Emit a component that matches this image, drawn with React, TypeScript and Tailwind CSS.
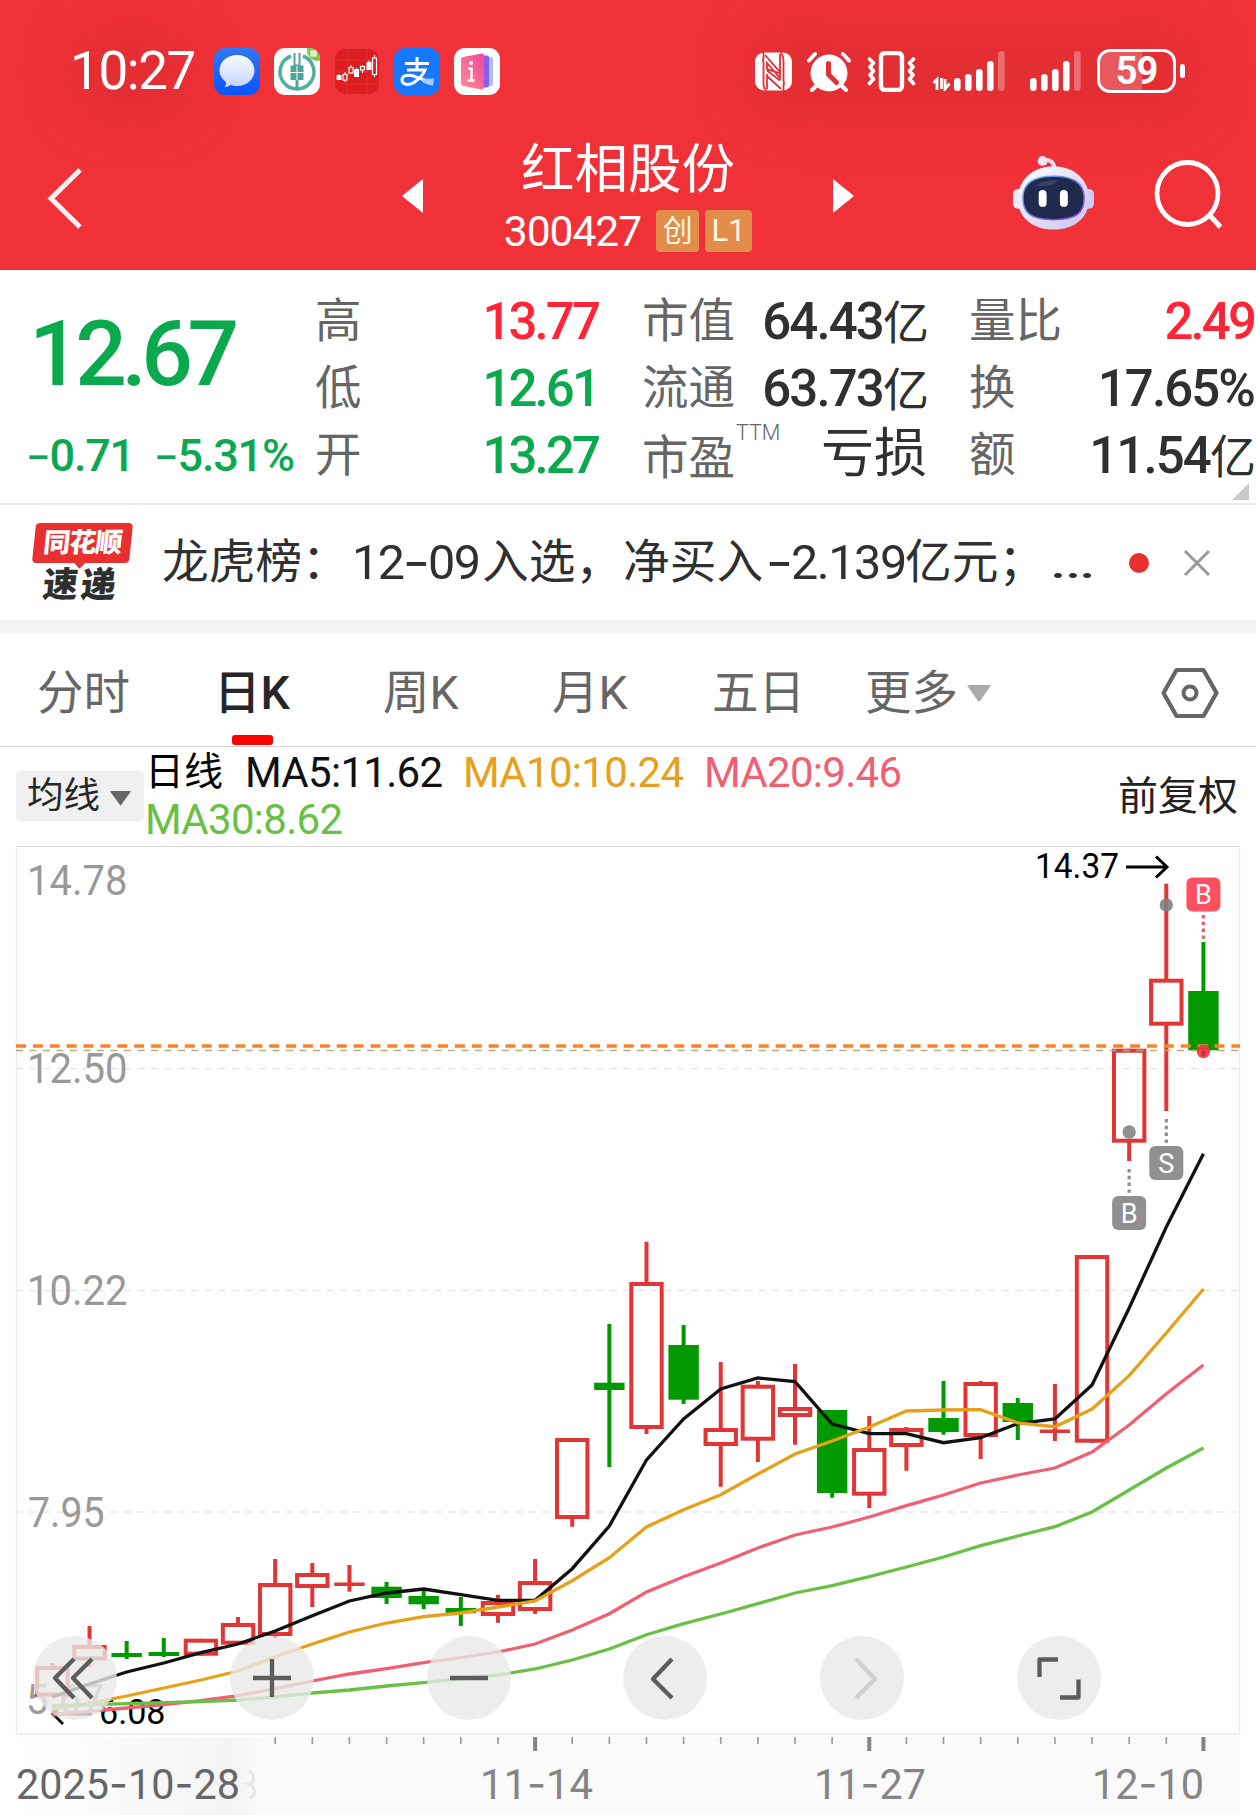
import { clsx } from "clsx";
import type { ReactNode } from "react";

type Candle = {
  kind: "up" | "down" | "flat";
  high: number;
  top: number;
  bottom: number;
  low: number;
};

const STEP = 37.13;
const FIRST_X = 52.4;
const xAt = (i: number) => FIRST_X + STEP * i;

// [kind, high, body top, body bottom, low]
const RAW: [Candle["kind"], number, number, number, number][] = [
  ["up", 1663, 1666, 1696.5, 1697],
  ["up", 1626, 1645, 1660.5, 1667],
  ["down", 1641, 1653, 1657, 1659],
  ["down", 1638, 1652, 1656, 1657],
  ["up", 1638.7, 1638.7, 1655.7, 1655.7],
  ["up", 1617, 1623, 1644.7, 1644.7],
  ["up", 1559, 1583, 1636, 1638],
  ["up", 1563, 1573, 1588, 1607],
  ["flat", 1565, 1582.5, 1586, 1591.7],
  ["down", 1582, 1586.7, 1598, 1604],
  ["down", 1590, 1596, 1604.3, 1609],
  ["down", 1597, 1608, 1613.3, 1626],
  ["up", 1594.7, 1601, 1616, 1622.7],
  ["up", 1559, 1581, 1611, 1614],
  ["up", 1438, 1438, 1519, 1526.7],
  ["down", 1324, 1382.7, 1390, 1467],
  ["up", 1241.7, 1282, 1429, 1434],
  ["down", 1325, 1345, 1399.7, 1404],
  ["up", 1362, 1428, 1446, 1486.7],
  ["up", 1381, 1384.7, 1440.7, 1462],
  ["up", 1364, 1407, 1417, 1444.7],
  ["down", 1410, 1410, 1493, 1497.7],
  ["up", 1416, 1448, 1495.7, 1508],
  ["up", 1427, 1428, 1447, 1470.7],
  ["down", 1381, 1418, 1432, 1434.7],
  ["up", 1381, 1382, 1437, 1459],
  ["down", 1398, 1403, 1422, 1440],
  ["flat", 1384, 1429.5, 1433, 1441],
  ["up", 1255, 1255, 1442.7, 1442.7],
  ["up", 1048.7, 1048.7, 1142.7, 1161],
  ["up", 883.7, 978.7, 1025.7, 1111],
  ["down", 942, 991, 1050.3, 1050.3],
];

const CANDLES: Candle[] = RAW.map(([kind, high, top, bottom, low]) => ({
  kind,
  high,
  top,
  bottom,
  low,
}));

const MA_LINES = [
  {
    color: "#111111",
    ys: [
      1697, 1684, 1672, 1663, 1652.7, 1644, 1631, 1615.7, 1601, 1593, 1589,
      1594.7, 1600.3, 1600.3, 1568.7, 1526, 1460, 1419, 1389, 1378, 1381.7,
      1424, 1433.7, 1433.7, 1442.7, 1437.7, 1423.5, 1419, 1385, 1308, 1227,
      1153.7,
    ],
  },
  {
    color: "#e6a019",
    ys: [
      1709, 1703, 1696, 1688, 1680, 1671, 1656.7, 1644, 1632, 1623, 1616.7,
      1613, 1607, 1601, 1580.7, 1557.7, 1527, 1509.7, 1494.7, 1474, 1454, 1441,
      1427, 1411, 1410, 1409.7, 1423, 1426.7, 1409, 1375.7, 1333, 1289,
    ],
  },
  {
    color: "#f05f72",
    ys: [
      1715, 1711.3, 1708, 1704.7, 1700.7, 1695.7, 1688.7, 1681, 1674, 1668.7,
      1662.7, 1657.7, 1652, 1644, 1630, 1613.7, 1592, 1576.7, 1563, 1548, 1535,
      1527, 1517, 1505.7, 1495, 1483, 1475, 1468, 1452, 1425, 1393.7, 1365,
    ],
  },
  {
    color: "#6abf45",
    ys: [
      1705.7, 1704.7, 1703.7, 1702.7, 1701.7, 1700, 1697, 1693, 1690, 1686,
      1682.7, 1678.7, 1675, 1669, 1660, 1649, 1634.7, 1623.7, 1614, 1603.7,
      1593, 1585.7, 1576.7, 1567, 1557, 1545.7, 1536, 1526.7, 1512, 1490, 1468,
      1448,
    ],
  },
];

const PRICE_LABELS = [
  { text: "14.78", x: 29, y: 895, w: 98 },
  { text: "12.50", x: 29, y: 1083, w: 98 },
  { text: "10.22", x: 29, y: 1305, w: 98 },
  { text: "7.95", x: 30, y: 1526.5, w: 74 },
  { text: "5.67", x: 28, y: 1714, w: 75 },
];

// Keeps hyphens as wide as a digit dash
function Num({ children }: { children: string }) {
  return (
    <>
      {children.split(/(-)/).map((part, i) =>
        part === "-" ? (
          <span key={i} className="mx-[2px] inline-block scale-x-125 font-['Inter'] font-normal">
            -
          </span>
        ) : (
          part
        )
      )}
    </>
  );
}

function AppIcons() {
  return (
    <div className="flex gap-[14px]">
      <svg className="h-[47px] w-[46px]" viewBox="0 0 46 47">
        <defs>
          <linearGradient id="msg" x1="0" y1="0" x2="0" y2="1">
            <stop offset="0" stopColor="#2f78f2" />
            <stop offset="1" stopColor="#0a55fa" />
          </linearGradient>
          <linearGradient id="bubble" x1="0" y1="0" x2="0" y2="1">
            <stop offset="0" stopColor="#f8faff" />
            <stop offset="1" stopColor="#c3d3fb" />
          </linearGradient>
        </defs>
        <rect width="46" height="47" rx="11" fill="url(#msg)" />
        <path
          d="M23 7c9.700 0 17.500 6.800 17.500 15.500S33 38 23 38c-2.500 0-4.500-.4-6.500-1.200-1.500 1.500-3.500 2.300-6 2.400 1.200-1.500 1.700-3.200 1.400-5.200C8 31 5.500 27 5.500 22.500 5.500 13.800 13.300 7 23 7z"
          fill="url(#bubble)"
        />
      </svg>
      <svg className="h-[47px] w-[46px]" viewBox="0 0 46 47">
        <defs>
          <clipPath id="bankClip">
            <rect width="46" height="47" rx="11" />
          </clipPath>
        </defs>
        <g clipPath="url(#bankClip)">
          <rect width="46" height="47" fill="#fff" />
          <path
            d="M17 8a17 17 0 1 0 12 0"
            fill="none"
            stroke="#4fb09f"
            strokeWidth="3.500"
          />
          <path
            d="M19.500 5h2v11.500h3V5h2v12.500h3V32h-5v9h-3v-9h-5V17.500h3z"
            fill="#4aa79c"
          />
          <path d="M16 24.500h14M23 18v14" stroke="#fff" strokeWidth="1" />
          <circle cx="43" cy="3" r="10" fill="#7ccb3f" />
          <circle cx="38" cy="4" r="2" fill="#dff3cf" />
          <circle cx="41" cy="4" r="2" fill="#dff3cf" />
          <circle cx="38" cy="7" r="2" fill="#dff3cf" />
          <circle cx="41" cy="7" r="2" fill="#dff3cf" />
        </g>
      </svg>
      <svg className="h-[47px] w-[46px]" viewBox="0 0 46 47">
        <rect
          x=".5"
          y=".5"
          width="45"
          height="46"
          rx="11"
          fill="#de1d20"
          stroke="#e23a3a"
        />
        <path
          d="M13 1v45M33 1v45M1 12h44M1 24h44M1 36h44"
          stroke="#e8383a"
          strokeWidth=".6"
        />
        <g fill="#fff">
          <rect x="2.500" y="27" width="5" height="5" />
          <rect x="20" y="21" width="5" height="8" />
          <rect x="32.500" y="14" width="5" height="8" />
        </g>
        <path
          d="M5 26v2M11 24v10M17 17v9M22.500 20v2M28.500 17v8M35 12.500v3M40.500 7v22"
          stroke="#fff"
        />
        <g fill="#de1d20" stroke="#fff" strokeWidth="1.200">
          <rect x="9" y="26.500" width="4" height="5.500" />
          <rect x="15" y="19.500" width="4" height="5.500" />
          <rect x="26.500" y="18.500" width="4" height="3.500" />
          <rect x="38.500" y="10" width="4" height="16.500" />
        </g>
      </svg>
      <svg className="h-[47px] w-[46px]" viewBox="0 0 46 47">
        <rect width="46" height="47" rx="11" fill="#1677ff" />
        <path
          d="M11 15.500h24M23 9v13M13 22h18c-2 5-6 9-11 12.500-5 3-12 2.500-12-2.500s7-6 13-3.500 11 5 18 5.500"
          fill="none"
          stroke="#fff"
          strokeWidth="3"
        />
        <path d="M28 31l12-.500-1 7c-4-.500-7-1.500-11-3.500z" fill="#a9cdff" />
      </svg>
      <svg className="h-[47px] w-[46px]" viewBox="0 0 46 47">
        <defs>
          <linearGradient id="card" x1="0" y1="1" x2="1" y2="0">
            <stop offset="0" stopColor="#ff8e94" />
            <stop offset="1" stopColor="#ef4694" />
          </linearGradient>
        </defs>
        <rect width="46" height="47" rx="11" fill="#fff" />
        <rect x="29" y="9" width="10" height="29" rx="2" fill="#a9c0ff" />
        <rect x="25" y="7.500" width="10" height="32" rx="2" fill="#8a5cf0" />
        <path
          d="M9 9l19-3.500q2 0 2 2v32q0 2-2 2L9 38q-2-.500-2-2V11q0-1.500 2-2z"
          fill="url(#card)"
        />
        <circle cx="17" cy="15" r="2" fill="#fff" />
        <path d="M14 20.500h3.500v12M13.500 32.500h7" stroke="#fff" strokeWidth="2.400" fill="none" />
      </svg>
    </div>
  );
}

function SignalBars({ arrows = false }: { arrows?: boolean }) {
  const tops = [27, 23, 18, 10, 0];
  return (
    <svg
      className={clsx("h-10", arrows ? "w-[73px]" : "w-[51px]")}
      viewBox={arrows ? "-22 0 73 40" : "0 0 51 40"}
    >
      {arrows && (
        <path
          d="M-20.500 32l3.500-3.500V39M-12.500 27v11M-12.500 38M-9 28v10l4.500-5.500"
          fill="none"
          stroke="#fff"
          strokeWidth="2.800"
        />
      )}
      {tops.map((top, i) => (
        <rect
          key={top}
          x={i * 11}
          y={top}
          width="6.600"
          height={40 - top}
          rx="3.300"
          fill="#fff"
          opacity={i === 4 ? 0.3 : 1}
        />
      ))}
    </svg>
  );
}

function StatusBar() {
  return (
    <div className="relative flex h-[142px] items-center pl-[70px]">
      <div className="absolute top-[28px] left-[72px] h-[90px] w-[120px] rounded-full bg-[#e22e33] blur-[22px]" />
      <div className="absolute top-[28px] left-[745px] h-[90px] w-[455px] rounded-full bg-[#e22e33] blur-[22px]" />
      <div className="relative flex w-full items-center">
        <span className="w-[143.500px] text-[53px] leading-none tracking-[-1.400px]">10:27</span>
        <AppIcons />
        <div className="ml-auto flex items-center pr-[71px]">
          <svg className="h-[39px] w-[38px]" viewBox="0 0 38 39">
            <rect y=".5" width="37" height="38" rx="9" fill="#fff" />
            <path
              d="M8.500 0v6q-1 2 0 4V33q.5 4 3 6M28.500 39v-6q1-2 0-4V8q-.5-5-3-8"
              fill="none"
              stroke="#e52f34"
              strokeWidth="1.800"
            />
            <path
              d="M12 11l13 15v-4.500L12 17zM12 18.500l13 10M12 22v15M12 24l14 13M25 2v18L10 3"
              fill="none"
              stroke="#e52f34"
              strokeWidth="1.800"
            />
          </svg>
          <svg className="ml-[14px] h-[41px] w-[44px]" viewBox="0 0 44 41">
            <circle cx="22" cy="22" r="18.500" fill="#fff" />
            <path
              d="M2 9.500l6-6.500M42 9.500L36 3M10 34l-5 5M34 34l5 5"
              stroke="#fff"
              strokeWidth="4"
              strokeLinecap="round"
            />
            <path
              d="M21.500 12.500v11l8 8"
              fill="none"
              stroke="#e52f34"
              strokeWidth="5"
              strokeLinecap="round"
              strokeLinejoin="round"
            />
          </svg>
          <svg className="ml-[16px] h-[41px] w-[49px]" viewBox="0 0 49 41">
            <rect
              x="14"
              y="2"
              width="21"
              height="37"
              rx="4"
              fill="none"
              stroke="#fff"
              strokeWidth="4.400"
            />
            <path
              d="M2.500 8l4 4-3.500 4 3.500 4-3.500 4 3.500 4-4 4.500M46.500 8l-4 4 3.500 4-3.500 4 3.500 4-3.500 4 4 4.500"
              fill="none"
              stroke="#fff"
              strokeWidth="3.600"
              strokeLinecap="round"
              strokeLinejoin="round"
            />
          </svg>
          <div className="ml-[16px]">
            <SignalBars arrows />
          </div>
          <div className="ml-[25px]">
            <SignalBars />
          </div>
          <div className="ml-[16px] flex h-[44px] w-[79px] items-center justify-center rounded-[13px] border-[3px] border-white bg-[linear-gradient(90deg,#e9585c_58%,transparent_58%)] text-[38px] leading-none font-bold tracking-[-1px]">
            59
          </div>
          <div className="ml-1 h-[14px] w-[5px] rounded-full bg-white" />
        </div>
      </div>
    </div>
  );
}

function Robot() {
  return (
    <svg className="h-[76px] w-[81px]" viewBox="0 0 82 76">
      <defs>
        <linearGradient id="head" x1="0" y1="0" x2="1" y2="1">
          <stop offset="0" stopColor="#ffffff" />
          <stop offset="1" stopColor="#c9c4ee" />
        </linearGradient>
        <linearGradient id="visor" x1="0" y1="0" x2="1" y2="1">
          <stop offset="0" stopColor="#5fb8f0" />
          <stop offset="1" stopColor="#8a35e8" />
        </linearGradient>
      </defs>
      <path
        d="M30 5q11-2 12 8"
        fill="none"
        stroke="#e6e1f6"
        strokeWidth="4"
      />
      <circle cx="30" cy="5.500" r="5" fill="#ece8fa" />
      <rect x="0" y="34" width="12" height="20" rx="5" fill="#ece9fb" />
      <rect x="70" y="34" width="12" height="20" rx="5" fill="#cfcaf0" />
      <path
        d="M41 11C62 11 77 25 77 44S62 75 41 75 5 63 5 44 20 11 41 11z"
        fill="url(#head)"
      />
      <path
        d="M41 21c21 0 31 7 31 22s-8 22-31 22-31-7-31-22 10-22 31-22z"
        fill="#1f2a4d"
        stroke="url(#visor)"
        strokeWidth="1.500"
      />
      <path d="M22 31q9-7 24-6-4 7-24 6z" fill="#5b6484" opacity=".4" />
      <rect x="26" y="35" width="8" height="17" rx="4" fill="#fff" />
      <rect x="47.500" y="35" width="8" height="17" rx="4" fill="#fff" />
    </svg>
  );
}

function TitleBar() {
  return (
    <div className="flex h-32 items-start">
      <svg className="mt-[24px] ml-[46px] h-[64px] w-[38px]" viewBox="0 0 38 64">
        <path d="M34 4L5 32.500l29 28.500" fill="none" stroke="#fff" strokeWidth="5" strokeOpacity=".92" />
      </svg>
      <svg className="mt-[37px] ml-[318px] h-[34px] w-[21px]" viewBox="0 0 21 34">
        <path d="M21 0v34L0 17z" fill="#fff" />
      </svg>
      <div className="flex w-[410px] flex-col items-center">
        <h1 className="mt-px text-[53.500px] leading-[54px]">红相股份</h1>
        <div className="mt-[11px] flex items-center text-[42.500px] leading-[42px]">
          <span className="mt-[3px] mr-[15px] tracking-[-1px]">300427</span>
          <span className="mr-[6px] flex h-[42px] w-[43px] items-center justify-center rounded bg-[#e28d4a] text-[30px] text-[#fff6e6]">
            创
          </span>
          <span className="flex h-[42px] w-[47px] items-center justify-center rounded bg-[#e28d4a] text-[31px] text-[#fff6e6]">
            L1
          </span>
        </div>
      </div>
      <svg className="mt-[37px] h-[34px] w-[21px]" viewBox="0 0 21 34">
        <path d="M0 0v34l21-17z" fill="#fff" />
      </svg>
      <div className="mt-[13px] ml-[159px]">
        <Robot />
      </div>
      <svg className="mt-[18px] ml-[58px] h-[70px] w-[72px]" viewBox="0 0 72 70">
        <ellipse cx="35.500" cy="33.500" rx="30.500" ry="31" fill="none" stroke="#fff" strokeWidth="4.800" />
        <path d="M56.500 54l12 13" stroke="#fff" strokeWidth="5" />
      </svg>
    </div>
  );
}

function Cell({
  label,
  value,
  tone = "text-[#303030]",
}: {
  label: ReactNode;
  value: string;
  tone?: string;
}) {
  const words = value === "亏损";
  const coloured = tone !== "text-[#303030]";
  return (
    <div className="flex h-[67px] items-center justify-between">
      <span className="mt-px text-[46.500px] whitespace-nowrap text-[#666]">{label}</span>
      <span
        className={clsx(
          "font-medium whitespace-nowrap",
          words && "text-[53px] font-normal",
          !words && "mt-px text-[51px]",
          !words && (coloured ? "tracking-[-2.900px]" : "tracking-[-1.900px]"),
          tone
        )}
      >
        {value.endsWith("亿") ? (
          <>
            {value.slice(0, -1)}
            <span className="text-[46px] font-normal">亿</span>
          </>
        ) : (
          value
        )}
      </span>
    </div>
  );
}

function Quote() {
  const red = "text-[#ff2437]";
  const green = "text-[#0ba94d]";
  return (
    <section className="relative flex h-[235px] border-b-2 border-[#ebebeb] pt-[17px] leading-none">
      <div className="w-[315px] shrink-0 font-medium text-[#0ba94d]">
        <div className="mt-[22px] pl-[29px] text-[91px] tracking-[-5.500px]">12.67</div>
        <div className="mt-[32px] flex pl-[26px] text-[45px] tracking-[-1.200px] whitespace-nowrap">
          <span className="w-[128px]">
            <Num>-0.71</Num>
          </span>
          <span>
            <Num>-5.31%</Num>
          </span>
        </div>
      </div>
      <div className="w-[283px]">
        <Cell label="高" value="13.77" tone={red} />
        <Cell label="低" value="12.61" tone={green} />
        <Cell label="开" value="13.27" tone={green} />
      </div>
      <div className="ml-[44px] w-[285px]">
        <Cell label="市值" value="64.43亿" />
        <Cell label="流通" value="63.73亿" />
        <Cell
          label={
            <span className="flex pt-[7px]">
              市盈
              <sup className="top-0 -mt-[13px] ml-px text-[21.500px] leading-none font-light">
                TTM
              </sup>
            </span>
          }
          value="亏损"
        />
      </div>
      <div className="ml-[42px] w-[285px]">
        <Cell label="量比" value="2.49" tone={red} />
        <Cell label="换" value="17.65%" />
        <Cell label="额" value="11.54亿" />
      </div>
      <svg className="absolute right-[7px] bottom-[3px] h-[17px] w-[17px]" viewBox="0 0 17 17">
        <path d="M17 0v17H0z" fill="#cbcbcb" />
      </svg>
    </section>
  );
}

function NewsBar() {
  return (
    <section className="flex h-[115px] items-center text-[#303030]">
      <div className="ml-[34px] flex w-[128px] flex-col leading-none font-black">
        <div className="relative flex h-[40px] w-[97px] -skew-x-6 items-center justify-center rounded-[4px] bg-[#e93030] text-[27px] tracking-[-1px] text-white">
          同花顺
          <span className="absolute -bottom-1 left-[44px] h-2 w-2 rotate-45 bg-[#e93030]" />
        </div>
        <span className="mt-[5px] ml-[9px] -skew-x-6 text-[35px] tracking-[3px] text-[#2f2f2f]">速递</span>
      </div>
      <p className="flex h-[60px] w-[932px] items-center text-[46.700px] leading-none whitespace-nowrap">
        <span className="w-[190px]">龙虎榜：</span>
        <span className="w-[130px] text-[48.500px] tracking-[-1.600px]">
          <Num>12-09</Num>
        </span>
        <span className="w-[141px]">入选，</span>
        <span className="w-[143px]">净买入</span>
        <span className="w-[139px] text-[48.500px] tracking-[-1.400px]">
          <Num>-2.139</Num>
        </span>
        <span className="w-[144px]">亿元；</span>
        <span className="inline-block origin-left scale-x-150">…</span>
      </p>
      <span className="ml-[35px] h-5 w-5 rounded-full bg-[#e93030]" />
      <svg className="ml-[34px] h-[28px] w-[28px]" viewBox="0 0 28 28">
        <path d="M2 2l24 24M26 2L2 26" stroke="#999" strokeWidth="3" />
      </svg>
    </section>
  );
}

function Tabs() {
  return (
    <nav className="relative flex h-[114px] items-center border-b border-[#d6d6d6] pt-[7px] pl-[37px] text-[46.500px] leading-none text-[#666]">
      <span className="w-[177px]">分时</span>
      <span className="w-[169px] font-medium text-[#262626]">日K</span>
      <span className="w-[169px]">周K</span>
      <span className="w-[160px]">月K</span>
      <span className="w-[153px]">五日</span>
      <span className="w-[102px]">更多</span>
      <svg className="h-[17px] w-[24px]" viewBox="0 0 24 17">
        <path d="M1 0h22q1 0 .5 1L13 16q-1 1-2 0L.5 1Q0 0 1 0z" fill="#aaa" />
      </svg>
      <svg className="ml-[170px] h-[52px] w-[58px]" viewBox="0 0 58 52">
        <path
          d="M15.500 3h27L55.500 26l-13 23h-27L2.500 26z"
          fill="none"
          stroke="#666"
          strokeWidth="4.200"
          strokeLinejoin="round"
        />
        <circle cx="29" cy="26" r="6.500" fill="none" stroke="#666" strokeWidth="4" />
      </svg>
      <span className="absolute bottom-px left-[232px] h-[10px] w-[41px] rounded-[3px] bg-[#ff0000]" />
    </nav>
  );
}

function Indicators() {
  return (
    <div className="flex h-[99px] pl-[16px] leading-none">
      <button className="mt-[24px] flex h-[50px] w-[128px] items-center rounded bg-[#f0f0f0] pl-[11px] text-[36.500px] text-[#262626]">
        均线
        <svg className="mt-1 ml-[10px] h-[15px] w-[21px]" viewBox="0 0 21 15">
          <path d="M1 0h19q1 0 .5 1L11 14q-.5 1-1 0L.5 1Q0 0 1 0z" fill="#666" />
        </svg>
      </button>
      <div className="mt-[2px] ml-px flex w-[973px] flex-wrap content-start text-[42px] leading-[47px] tracking-[-0.700px] whitespace-nowrap">
        <span className="w-[100px] text-[39px] tracking-normal text-black">日线</span>
        <span className="w-[218px] text-[#111]">MA5:11.62</span>
        <span className="w-[241px] text-[#e6a019]">MA10:10.24</span>
        <span className="w-[300px] text-[#f05f72]">MA20:9.46</span>
        <span className="w-full text-[#6abf45]">MA30:8.62</span>
      </div>
      <span className="mt-[30px] text-[40px] whitespace-nowrap text-[#222]">前复权</span>
    </div>
  );
}

function CandleShape({ candle, x }: { candle: Candle; x: number }) {
  const { kind, high, top, bottom, low } = candle;
  const color = kind === "down" ? "#009a00" : "#e23535";
  if (kind === "up") {
    return (
      <g stroke={color} strokeWidth="4" fill="none">
        <path d={`M${x} ${high}V${top + 1}M${x} ${bottom - 1}V${low}`} />
        <rect x={x - 15.200} y={top + 2} width="30.400" height={bottom - top - 4} />
      </g>
    );
  }
  return (
    <g fill={color}>
      <rect x={x - 2} y={high} width="4" height={low - high} />
      <rect x={x - 15.200} y={top} width="30.400" height={bottom - top} />
    </g>
  );
}

function Marker({
  x,
  y,
  letter,
  color,
}: {
  x: number;
  y: number;
  letter: string;
  color: string;
}) {
  return (
    <g>
      <rect x={x - 17} y={y} width="34" height="34" rx="6" fill={color} />
      <text x={x} y={y + 26.500} textAnchor="middle" fontSize="27" fill="#fff">
        {letter}
      </text>
    </g>
  );
}

function Chart() {
  return (
    <svg
      className="block h-[969px] w-[1256px] font-['Roboto','Noto_Sans_CJK_SC',sans-serif]"
      viewBox="0 846 1256 969"
    >
      <path d="M16.500 847V1734H1239.500V847" fill="none" stroke="#ececec" strokeWidth="1.500" />
      <path d="M16 846.500H1240" stroke="#d9d9d9" />
      {[1068.500, 1290.500, 1512].map((y) => (
        <path key={y} d={`M16 ${y}H1239`} stroke="#e6e6e6" strokeWidth="1.500" strokeDasharray="7 6.500" />
      ))}

      <g fill="#999" fontSize="42">
        {PRICE_LABELS.map((l) => (
          <text key={l.text} x={l.x - 2} y={l.y} textLength={l.w + 2.500} lengthAdjust="spacingAndGlyphs">
            {l.text}
          </text>
        ))}
      </g>

      {CANDLES.map((candle, i) => (
        <CandleShape key={i} candle={candle} x={xAt(i)} />
      ))}

      <text x="99" y="1724" fontSize="34.500" textLength="66.500" lengthAdjust="spacingAndGlyphs">
        6.08
      </text>
      <path d="M92 1714H54M63 1724L53 1714l10-10" fill="none" stroke="#000" strokeWidth="2.800" />

      {MA_LINES.map((line) => (
        <polyline
          key={line.color}
          points={line.ys.map((y, i) => `${xAt(i)},${y}`).join(" ")}
          fill="none"
          stroke={line.color}
          strokeWidth="3.300"
        />
      ))}

      <path d="M16 1050.500H1239" stroke="#c9a673" strokeWidth="1.700" strokeDasharray="7 6.500" />
      <path d="M16 1046H1240" stroke="#f5842a" strokeWidth="3.500" strokeDasharray="10 6.880" />

      <text x="1035" y="878" fontSize="35" textLength="84" lengthAdjust="spacingAndGlyphs">
        14.37
      </text>
      <path d="M1126 867h40M1156 856.500l11 10.500-11 10.500" fill="none" stroke="#000" strokeWidth="3" />

      <g fill="#808080" fillOpacity=".88">
        <circle cx={xAt(30)} cy="905" r="6.700" />
        <circle cx={xAt(29)} cy="1132" r="6.700" />
      </g>
      <circle cx={xAt(31)} cy="1051.500" r="6.700" fill="#f23440" fillOpacity=".9" />
      <rect x={xAt(31) - 2} y="1051" width="4" height="5" fill="#c93034" />

      <g strokeWidth="3.300" strokeDasharray="3.400 3.400">
        <path d={`M${xAt(31)} 915v25`} stroke="#e8606d" />
        <path d={`M${xAt(30)} 1119v25`} stroke="#909090" />
        <path d={`M${xAt(29)} 1169v25`} stroke="#909090" />
      </g>
      <Marker x={xAt(31)} y={877.500} letter="B" color="#ff5060" />
      <Marker x={xAt(30)} y={1146} letter="S" color="#909090" />
      <Marker x={xAt(29)} y={1196} letter="B" color="#909090" />

      {/* time axis */}
      <defs>
        <linearGradient id="dateFade">
          <stop offset="0" stopColor="#ffffff" />
          <stop offset=".85" stopColor="#f4f4f4" />
          <stop offset="1" stopColor="#fafafa" />
        </linearGradient>
      </defs>
      <rect x="16" y="1737" width="1224" height="78" fill="#fafafa" />
      <rect x="16" y="1738" width="250" height="77" fill="url(#dateFade)" />
      {CANDLES.map((_, i) => {
        if (i < 6) return null;
        const major = i === 13 || i === 22 || i === 31;
        return (
          <rect
            key={i}
            x={xAt(i) - (major ? 2 : 0.8)}
            y="1737"
            width={major ? 4 : 1.600}
            height={major ? 14 : 7}
            fill={major ? "#858585" : "#999"}
          />
        );
      })}
      <path d="M249 1771q5 2 4.500 7 0 5-4.500 6 5 2 5.500 7 0 6-5.500 7" fill="none" stroke="#e6e6e6" strokeWidth="3" />
      <AxisDate text="2025-10-28" x={16} w={224} color="#666" />
      <AxisDate text="11-14" x={480} w={113} color="#858585" />
      <AxisDate text="11-27" x={814} w={112} color="#858585" />
      <AxisDate text="12-10" x={1092} w={112} color="#858585" />
    </svg>
  );
}

function AxisDate({
  text,
  x,
  w,
  color,
}: {
  text: string;
  x: number;
  w: number;
  color: string;
}) {
  return (
    <text x={x} y="1799" fontSize="42" fill={color} textLength={w} lengthAdjust="spacingAndGlyphs">
      {text.split(/(-)/).map((part, i) => (
        <tspan key={i} className={part === "-" ? "font-['Inter']" : undefined}>
          {part}
        </tspan>
      ))}
    </text>
  );
}

const CONTROLS = [
  { name: "first", d: "M41 23L22 42l19 20M59 23L40 42l19 20", muted: false },
  { name: "zoom in", d: "M23 42h38M42 23v38", muted: false },
  { name: "zoom out", d: "M23 42h38", muted: false },
  { name: "previous", d: "M49 23L30 43l19 19", muted: false },
  { name: "next", d: "M36 23l19 20-19 19", muted: true },
  { name: "full screen", d: "M22.500 41V23.500H41M61.500 43.500V61.500H43", muted: false },
];

function Controls() {
  return (
    <div className="absolute top-[790px] left-[33px] flex gap-[112.800px]">
      {CONTROLS.map((c) => (
        <button key={c.name} aria-label={c.name} className="h-[84px] w-[84px] rounded-full bg-[#e8e8e8]/80">
          <svg className="h-[84px] w-[84px]" viewBox="0 0 84 84">
            <path
              d={c.d}
              fill="none"
              stroke={c.muted ? "#d0d0d0" : "#5c5c5c"}
              strokeWidth="4.300"
              strokeLinejoin="round"
            />
          </svg>
        </button>
      ))}
    </div>
  );
}

export default function App() {
  return (
    <div className="h-[1815px] w-[1256px] overflow-hidden bg-white font-['Roboto','Noto_Sans_CJK_SC',sans-serif]">
      <header className="h-[270px] bg-[#f03138] text-white">
        <StatusBar />
        <TitleBar />
      </header>
      <Quote />
      <NewsBar />
      <div className="h-[13px] bg-[#f4f4f4]" />
      <Tabs />
      <Indicators />
      <div className="relative">
        <Chart />
        <Controls />
      </div>
    </div>
  );
}
